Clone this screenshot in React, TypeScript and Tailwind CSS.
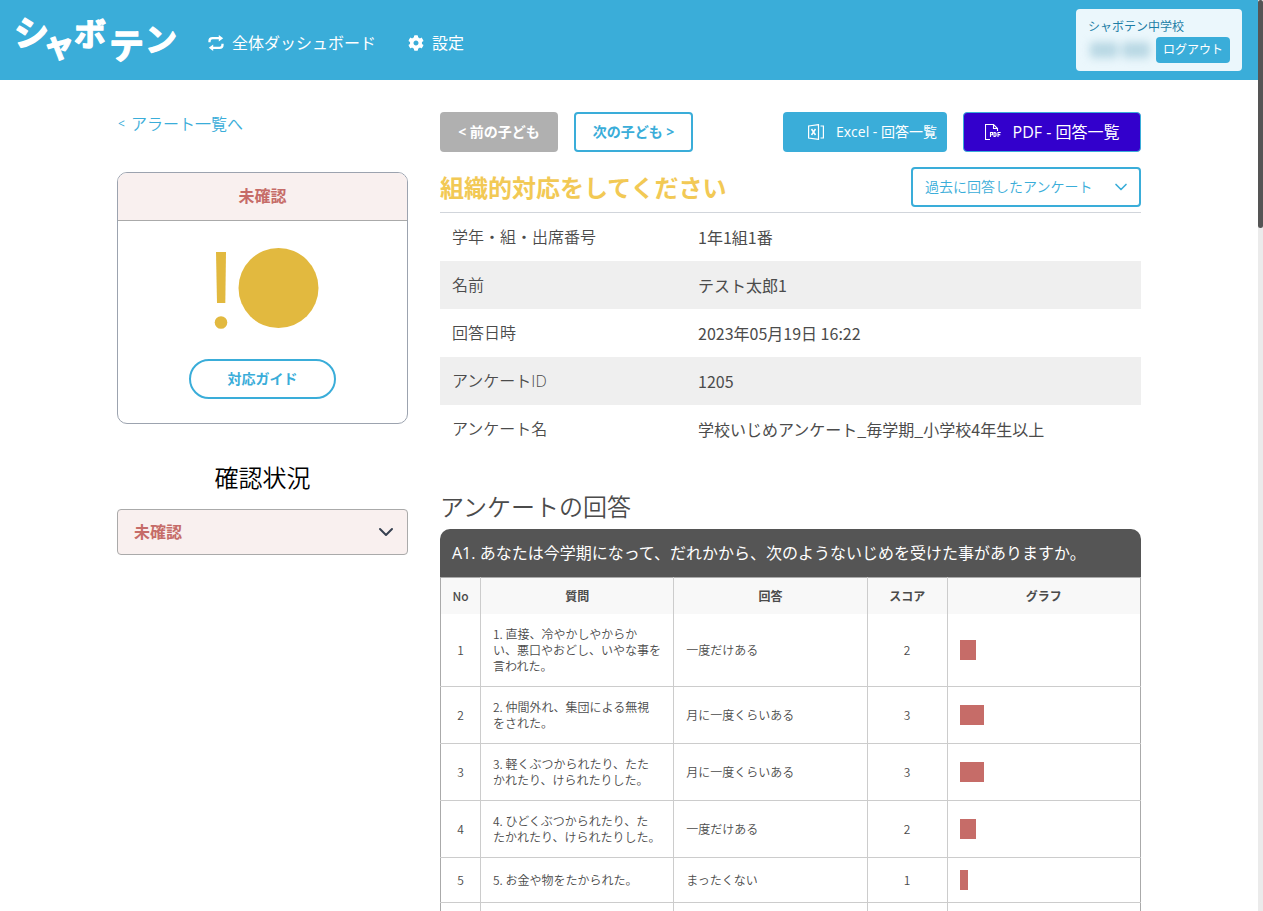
import React from "react";
import { FaCog } from "react-icons/fa";
import { FiChevronDown } from "react-icons/fi";

const details: [string, string][] = [
  ["学年・組・出席番号", "1年1組1番"],
  ["名前", "テスト太郎1"],
  ["回答日時", "2023年05月19日 16:22"],
  ["アンケートID", "1205"],
  ["アンケート名", "学校いじめアンケート_毎学期_小学校4年生以上"],
];

const answers = [
  { q: "1. 直接、冷やかしやからかい、悪口やおどし、いやな事を言われた。", a: "一度だけある", score: 2 },
  { q: "2. 仲間外れ、集団による無視\nをされた。", a: "月に一度くらいある", score: 3 },
  { q: "3. 軽くぶつかられたり、たた\nかれたり、けられたりした。", a: "月に一度くらいある", score: 3 },
  { q: "4. ひどくぶつかられたり、た\nたかれたり、けられたりした。", a: "一度だけある", score: 2 },
  { q: "5. お金や物をたかられた。", a: "まったくない", score: 1 },
  { q: "6. お金や物をかくされたり、\nぬすまれたり、こわされたりした。", a: "まったくない", score: 1 },
];

function Logo() {
  return (
    <svg
      width="174"
      height="72"
      viewBox="-4 -10 174 72"
      role="img"
      aria-label="シャボテン"
      fill="#fff"
      stroke="#fff"
      strokeWidth="1.300"
      strokeLinejoin="round"
      fontWeight="700"
      className="overflow-visible font-['Noto_Sans_CJK_JP',sans-serif]"
    >
      <text x="-2" y="32" fontSize="35">シ</text>
      <text x="27" y="43" fontSize="32" transform="rotate(-6 43 32)">ャ</text>
      <text x="58" y="32" fontSize="32">ボ</text>
      <text x="93" y="45" fontSize="35">テ</text>
      <text x="129" y="37" fontSize="32">ン</text>
    </svg>
  );
}

function LoopIcon() {
  return (
    <svg width="16" height="16" viewBox="0 0 16 16" fill="none" stroke="currentColor" strokeWidth="2.300" aria-hidden="true">
      <path d="M1.500 7.200V6Q1.500 3.200 4.500 3.200H12" />
      <path d="M14.500 8.800V10Q14.500 12.800 11.500 12.800H4" />
      <path d="M10.800 0L15.200 3.200 10.800 6.400zM5.200 9.600L.8 12.800 5.200 16z" fill="currentColor" stroke="none" />
    </svg>
  );
}

function ExcelIcon() {
  return (
    <svg width="16" height="16" viewBox="0 0 16 16" fill="none" stroke="currentColor" strokeWidth="1.200" aria-hidden="true">
      <path d="M.6 2L10.500.6v14.800L.6 14zM12.500 2h2.900v12h-2.900" />
      <path d="M3.500 5l4 6M7.500 5l-4 6" strokeWidth="1.500" />
    </svg>
  );
}

function PdfIcon() {
  return (
    <svg width="16" height="16" viewBox="0 0 16 16" fill="none" stroke="currentColor" strokeWidth="1.100" aria-hidden="true">
      <path d="M5 15.500H.5V.5h8l4 4V7M8.500.5v4h4" />
      <path d="M5.500 13V8.500h2v2.200h-2M9 8.500v4h1l1-.8V9.300l-1-.8zM13 13V8.500h2.700M13 10.600h2.300" />
    </svg>
  );
}

export default function App() {
  return (
    <div className="flex h-screen bg-white font-['Open_Sans','Noto_Sans_CJK_JP',sans-serif] font-[350] text-[#4b4b4b]">
      <div className="min-w-0 flex-1 overflow-y-auto [scrollbar-width:none]">
        <header className="flex h-20 items-center justify-between bg-[#3aadd9] pr-4 pl-3 text-white">
          <div className="flex items-center">
            <a href="#home" className="block">
              <Logo />
            </a>
            <nav className="ml-[22px] flex items-center gap-8 pt-1.5 text-base font-normal">
              <a href="#dashboard" className="flex items-center gap-2">
                <LoopIcon />
                全体ダッシュボード
              </a>
              <a href="#settings" className="flex items-center gap-2">
                <FaCog size={16} />
                設定
              </a>
            </nav>
          </div>
          <div className="rounded bg-[#ebf7fc] py-2 pr-3 pl-2">
            <p className="pl-1 text-xs leading-5 font-normal text-[#1d7ea6]">シャボテン中学校</p>
            <div className="flex items-center">
              <div className="flex h-[26px] w-[72px] items-center justify-center gap-1 blur-xs" aria-hidden="true">
                <span className="h-4 w-7 rounded bg-[#b9d8e4]" />
                <span className="h-4 w-7 rounded bg-[#b9d8e4]" />
              </div>
              <button type="button" className="h-[26px] rounded bg-[#3aadd9] px-[7px] text-xs font-normal">
                ログアウト
              </button>
            </div>
          </div>
        </header>

        <main className="mx-auto flex max-w-[1024px] items-start gap-8 pt-8">
          <aside className="w-[291px] shrink-0">
            <a href="#alerts" className="flex items-center gap-1.5 pl-px text-base leading-6 text-[#3aadd9]">
              <span className="text-xs font-normal">&lt;</span>
              アラート一覧へ
            </a>
            <section className="mt-9 overflow-hidden rounded-[10px] border border-[#9ca3af]">
              <h2 className="border-b border-[#aaa] bg-[#f9f0ef] text-center text-base leading-[47px] font-bold text-[#c66c68]">
                未確認
              </h2>
              <div className="flex flex-col items-center pt-[27px] pb-6">
                <svg width="115" height="82" viewBox="-9 0 115 82" fill="#e2b93f" aria-hidden="true">
                  <path d="M2 4h10l-.7 51H3z" />
                  <circle cx="7" cy="74.500" r="6.300" />
                  <circle cx="64.500" cy="40" r="40" />
                </svg>
                <button type="button" className="mt-[29px] h-10 w-[147px] rounded-full border-2 border-[#3aadd9] text-sm font-bold text-[#3aadd9]">
                  対応ガイド
                </button>
              </div>
            </section>
            <h2 className="mt-9 text-center text-2xl leading-9 text-black">
              <label htmlFor="status">確認状況</label>
            </h2>
            <div className="mt-[13px] grid items-center">
              <select
                id="status"
                className="col-start-1 row-start-1 h-[46px] w-full appearance-none rounded border border-[#aaa] bg-[#f9f0ef] px-4 text-base font-bold text-[#c66c68]"
              >
                <option>未確認</option>
                <option>確認済み</option>
              </select>
              <FiChevronDown size={24} className="pointer-events-none col-start-1 row-start-1 mr-2.5 justify-self-end text-[#374151]" />
            </div>
          </aside>

          <div className="min-w-0 flex-1">
            <div className="flex items-center justify-between">
              <div className="flex gap-4">
                <button type="button" className="h-10 w-[118px] rounded bg-[#b0b0b0] text-sm font-bold text-white">
                  &lt; 前の子ども
                </button>
                <button type="button" className="h-10 w-[119px] rounded border-2 border-[#3aadd9] text-sm font-bold text-[#3aadd9]">
                  次の子ども &gt;
                </button>
              </div>
              <div className="flex gap-4">
                <button type="button" className="flex h-10 w-[164px] items-center justify-end gap-3 rounded bg-[#3aadd9] pr-[10px] text-sm font-normal text-white">
                  <ExcelIcon />
                  Excel - 回答一覧
                </button>
                <button type="button" className="flex h-10 w-[178px] items-center justify-center gap-3 rounded border border-[#3aadd9] bg-[#3300cc] text-base font-normal text-white">
                  <PdfIcon />
                  PDF - 回答一覧
                </button>
              </div>
            </div>

            <div className="flex items-start justify-between border-b border-[#d1d5db] pt-[15px] pb-[3px]">
              <h1 className="text-2xl leading-[42px] font-bold text-[#f2c955]">組織的対応をしてください</h1>
              <div className="grid items-center">
                <select
                  aria-label="過去に回答したアンケート"
                  className="col-start-1 row-start-1 h-10 w-[230px] appearance-none rounded border-2 border-[#3aadd9] bg-white pl-3 text-sm text-[#3aadd9]"
                >
                  <option>過去に回答したアンケート</option>
                </select>
                <FiChevronDown size={20} className="pointer-events-none col-start-1 row-start-1 mr-2.5 justify-self-end text-[#3aadd9]" />
              </div>
            </div>

            <table className="w-full text-left text-base">
              <tbody>
                {details.map(([label, value]) => (
                  <tr key={label} className="h-12 even:bg-[#efefef]">
                    <th scope="row" className="w-[246px] pl-3 font-[350]">{label}</th>
                    <td className="pl-3 font-['Noto_Sans_CJK_JP',sans-serif] font-normal">{value}</td>
                  </tr>
                ))}
              </tbody>
            </table>

            <h2 className="mt-9 mb-1 text-2xl leading-9">アンケートの回答</h2>
            <h3 className="rounded-t-[10px] bg-[#555] px-3 text-base leading-[48px] font-normal text-white">
              A1. あなたは今学期になって、だれかから、次のようないじめを受けた事がありますか。
            </h3>
            <table className="w-full table-fixed border-collapse border border-[#aaa] font-['Noto_Sans_CJK_JP',sans-serif] text-xs leading-4">
              <thead>
                <tr className="h-9 bg-[#f8f8f8]">
                  <th scope="col" className="w-10 border-r border-[#ccc] font-medium">No</th>
                  <th scope="col" className="border-r border-[#ccc] font-bold">質問</th>
                  <th scope="col" className="border-r border-[#ccc] font-bold">回答</th>
                  <th scope="col" className="w-20 border-r border-[#ccc] font-bold">スコア</th>
                  <th scope="col" className="font-bold">グラフ</th>
                </tr>
              </thead>
              <tbody>
                {answers.map((row, i) => (
                  <tr key={row.q} className="border-b border-[#ccc]">
                    <td className="border-r border-[#ccc] text-center">{i + 1}</td>
                    <td className="border-r border-[#ccc] px-3 py-3 whitespace-pre-line">{row.q}</td>
                    <td className="border-r border-[#ccc] px-3 py-3">{row.a}</td>
                    <td className="border-r border-[#ccc] text-center">{row.score}</td>
                    <td className="px-3 py-3">
                      <div className="h-5 bg-[#c66c68]" style={{ width: row.score * 8 }} />
                    </td>
                  </tr>
                ))}
              </tbody>
            </table>
          </div>
        </main>
      </div>
      <div className="w-[5px] shrink-0 bg-[#ebebeb]" aria-hidden="true">
        <div className="h-1/4 rounded-sm bg-[#555]" />
      </div>
    </div>
  );
}
